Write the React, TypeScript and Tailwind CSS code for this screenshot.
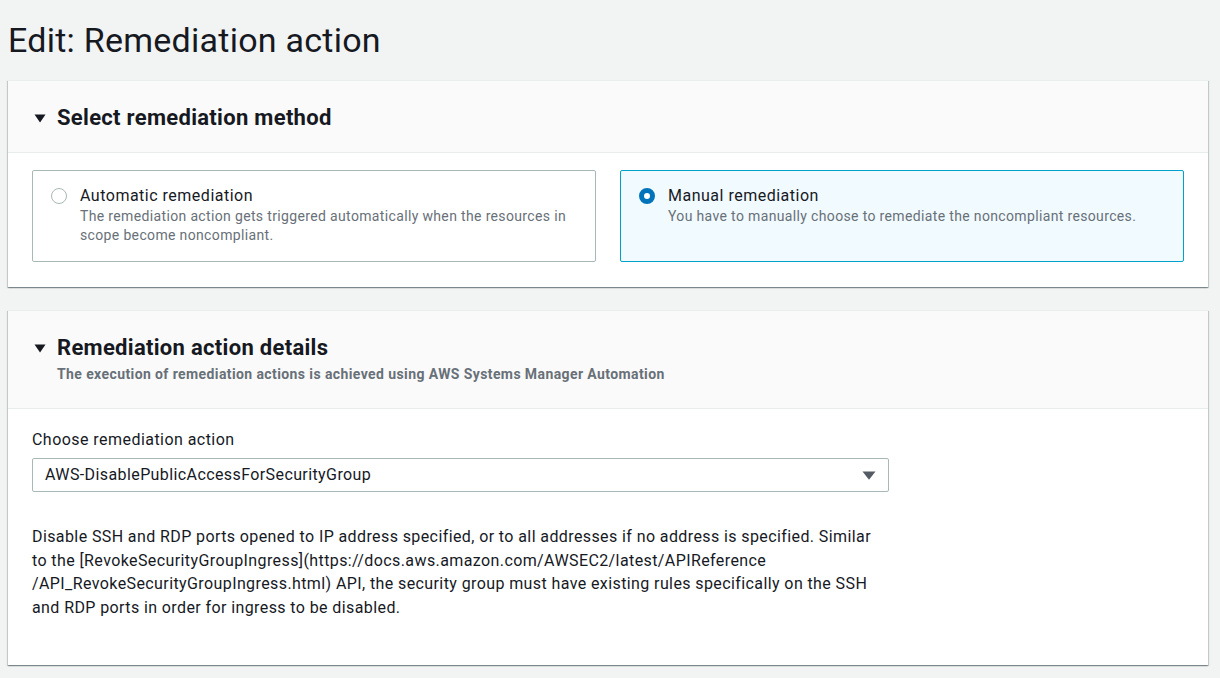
import React from "react";

const Caret = () => (
  <svg width="12" height="9" viewBox="0 0 12 9" className="shrink-0">
    <path d="M0.5 0.5h11L6 8.5z" fill="#16191f" />
  </svg>
);

const Panel: React.FC<{
  title: string;
  subtitle?: string;
  headerClass: string;
  bodyClass: string;
  children: React.ReactNode;
}> = ({ title, subtitle, headerClass, bodyClass, children }) => (
  <section className="w-[1200px] bg-white border-t border-[#eaeded] shadow-[0_1px_1px_0_rgba(0,28,36,0.3),1px_1px_1px_0_rgba(0,28,36,0.15),-1px_1px_1px_0_rgba(0,28,36,0.15)]">
    <div className={`bg-[#fafafa] border-b border-[#eaeded] pl-[26px] pr-6 ${headerClass}`}>
      <div className="flex items-center gap-[11px]">
        <Caret />
        <h2 className="text-[22px] leading-6 font-bold tracking-[0.3px] text-[#16191f]">{title}</h2>
      </div>
      {subtitle && (
        <p className="mt-1 pl-[23px] text-[14px] leading-5 font-bold tracking-[0.4px] text-[#687078]">
          {subtitle}
        </p>
      )}
    </div>
    <div className={bodyClass}>{children}</div>
  </section>
);

const Tile: React.FC<{
  label: string;
  description: React.ReactNode;
  selected?: boolean;
}> = ({ label, description, selected }) => (
  <div
    className={
      selected
        ? "h-[92px] rounded-[2px] border border-[#00a1c9] bg-[#f1faff] pl-[18px] pt-[14px] pr-4"
        : "h-[92px] rounded-[2px] border border-[#aab7b8] bg-white pl-[18px] pt-[14px] pr-4"
    }
  >
    <div className="flex gap-[13px]">
      <span
        className={
          selected
            ? "mt-[3px] w-4 h-4 shrink-0 rounded-full border-[5px] border-[#0073bb] bg-white"
            : "mt-[3px] w-4 h-4 shrink-0 rounded-full border border-[#aab7b8] bg-white"
        }
      />
      <div>
        <div className="text-[16px] leading-[22px] tracking-[0.5px] text-[#16191f]">{label}</div>
        <div className="text-[14px] leading-[19px] tracking-[0.35px] text-[#687078] whitespace-nowrap">
          {description}
        </div>
      </div>
    </div>
  </div>
);

export default function App() {
  return (
    <div
      className="min-h-screen bg-[#f2f3f3] pl-2 pt-5 pb-6"
      style={{ fontFamily: "Roboto, 'Liberation Sans', sans-serif" }}
    >
      <h1 className="text-[34px] leading-10 tracking-[0.25px] text-[#16191f] mb-5">Edit: Remediation action</h1>

      <Panel
        title="Select remediation method"
        headerClass="pt-[25px] pb-[22px]"
        bodyClass="px-6 pt-[17px] pb-[25px]"
      >
        <div className="grid grid-cols-2 gap-6">
          <Tile
            label="Automatic remediation"
            description={
              <>
                The remediation action gets triggered automatically when the resources in
                <br />
                scope become noncompliant.
              </>
            }
          />
          <Tile
            selected
            label="Manual remediation"
            description="You have to manually choose to remediate the noncompliant resources."
          />
        </div>
      </Panel>

      <div className="h-[23px]" />

      <Panel
        title="Remediation action details"
        subtitle="The execution of remediation actions is achieved using AWS Systems Manager Automation"
        headerClass="pt-[25px] pb-[24px]"
        bodyClass="px-6 pt-5 pb-[45px]"
      >
        <label className="block text-[16px] leading-[22px] tracking-[0.45px] text-[#16191f]">
          Choose remediation action
        </label>
        <div className="mt-[7px] w-[857px] h-[34px] flex items-center justify-between rounded-[2px] border border-[#aab7b8] bg-white pl-3 pr-[12px]">
          <span className="text-[16px] tracking-[0.4px] text-[#16191f]">AWS-DisablePublicAccessForSecurityGroup</span>
          <svg width="14" height="9" viewBox="0 0 14 9">
            <path d="M0.5 0.5h13L7 8.8z" fill="#545b64" />
          </svg>
        </div>
        <p className="mt-[33px] text-[16px] leading-[23.7px] tracking-[0.4px] text-[#16191f] whitespace-nowrap">
          Disable SSH and RDP ports opened to IP address specified, or to all addresses if no address is specified. Similar
          <br />
          to the [RevokeSecurityGroupIngress](https://docs.aws.amazon.com/AWSEC2/latest/APIReference
          <br />
          /API_RevokeSecurityGroupIngress.html) API, the security group must have existing rules specifically on the SSH
          <br />
          and RDP ports in order for ingress to be disabled.
        </p>
      </Panel>
    </div>
  );
}
